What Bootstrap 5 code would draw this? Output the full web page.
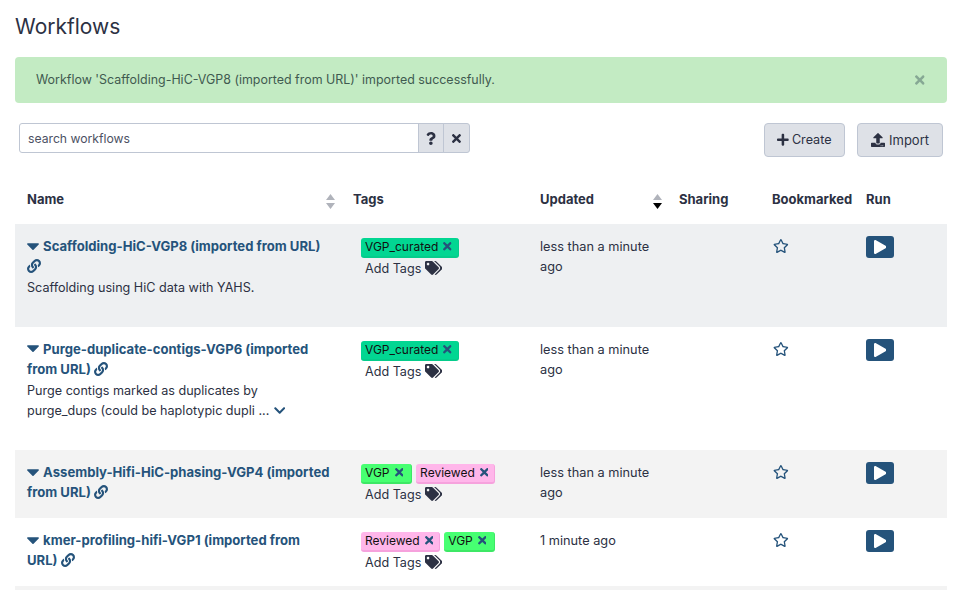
<!DOCTYPE html>
<html lang="en">

<head>
  <meta charset="UTF-8" />
  <meta name="viewport" content="width=device-width, initial-scale=1.0" />
  <title>Workflows</title>
  <link href="https://cdn.jsdelivr.net/npm/bootstrap@5.3.3/dist/css/bootstrap.min.css" rel="stylesheet" />
  <style>
    html, body { height: 590px; overflow: hidden; }
    body { font-family: Inter, "Liberation Sans", sans-serif; font-size: 12.6px; line-height: 20.4px; color: #2c3143; background: #fff; }
    .page-wrap { padding: 0 13px 0 15px; }
    .page-title { font-size: 21px; line-height: 26px; font-weight: 400; margin: 14px 0 17px; color: #2c3143; }
    .ico { fill: currentColor; height: 1em; vertical-align: -0.125em; }
    .flash { height: 46px; background: #c3ebc3; color: #3f5a50; border-radius: 4px; padding: 0 21px; margin-bottom: 20px; font-size: 12.45px; }
    .flash-close { color: #86a894; font-size: 14px; line-height: 1; margin-right: 1px; }
    .tools { padding: 0 4px; height: 53px; }
    .search-box { width: 451px; height: 30px; }
    .search-box .form-control { font-size: 12.2px; height: 30px; border-color: #bfc6d3; color: #4c5163; padding: 0 8px; border-radius: 3px 0 0 3px; box-shadow: none; }
    .search-box .form-control::placeholder { color: #4c5163; opacity: 1; }
    .search-btn { background: #dee1e7; border: 1px solid #bfc6d3; color: #2c3143; width: 26px; padding: 0; font-size: 13px; display: flex; align-items: center; justify-content: center; }
    .search-btn:last-child { width: 27px; border-radius: 0 3px 3px 0; margin-left: -1px; }
    .tool-btn { background: #dee1e7; border: 1px solid #bfc6d3; color: #2c3143; font-size: 12.6px; height: 34px; padding: 0 12.5px; border-radius: 4px; display: inline-flex; align-items: center; gap: 3px; }
    .tool-btn .ico { font-size: 13.5px; }
    .tool-import { font-size: 13px; gap: 4px; padding: 0 13px; }
    .tool-import .ico { font-size: 14px; }
    .wf-table { table-layout: fixed; width: 932px; margin: 0; color: #2c3143; font-size: 12.6px; }
    .wf-table > :not(caption) > * > * { border: 0; padding: 12px; background: transparent; box-shadow: none; color: inherit; }
    .wf-table thead th { font-size: 13px; font-weight: 700; padding-top: 12px; padding-bottom: 15px; height: 48px; position: relative; }
    .wf-table > tbody > tr > td.cell-name { padding-right: 10px; }
    .wf-table > tbody > tr > td.wf-when { font-size: 12.75px; padding-top: 13px; }
    .col-name { width: 326px; }
    .col-tags { width: 187px; }
    .col-updated { width: 139px; }
    .col-sharing { width: 93px; }
    .col-bookmarked { width: 94px; }
    .row-hover { background: #eef0f2; }
    .row-odd { background: #f3f3f3; }
    .sort-mark { position: absolute; top: 18px; right: 6px; width: 9px; height: 15px; }
    .sort-updated { right: 5px; }
    .wf-name { display: block; color: #25537b; font-size: 13.1px; font-weight: 700; text-decoration: none; }
    .wf-name .ico { color: #25537b; font-size: 14px; }
    .wf-name .caret { width: 12px; height: 7px; font-size: inherit; vertical-align: 1.5px; margin-right: 1px; }
    .wf-desc { margin: 1px 0 16.6px; }
    .wf-more { color: #25537b; margin-left: 1px; font-size: 13px; }
    .wf-tag { display: inline-flex; align-items: center; height: 20px; padding: 0 6px 1px 4px; margin: 2px 4px 0 0; border-radius: 3px; border-right: 1px solid transparent; border-bottom: 2px solid transparent; color: #111; font-size: 12px; line-height: 17px; gap: 5px; }
    .wf-tag .ico { color: #25537b; font-size: 12.5px; }
    .tag-curated { background: #02d692; border-color: #05cc8b; }
    .tag-vgp { background: #47ff72; border-color: #3de865; padding-right: 8px; }
    .tag-reviewed { background: #ffb6ea; border-color: #f6a2dd; }
    .tag-line { display: flex; flex-wrap: wrap; margin-left: 8px; }
    .add-tags { margin: 0 0 0 12px; padding-top: 1px; display: block; height: 22px; }
    .add-tags .ico { font-size: 14px; }
    .star-mark { color: #25537b; font-size: 14px; display: block; margin: 3px 0 0 1px; }
    .run-btn { background: #25537b; color: #fff; width: 28px; height: 22px; border-radius: 3px; border: 0; padding: 0; display: flex; align-items: center; justify-content: center; }
    .run-btn .ico { font-size: 14px; }
  </style>
</head>

<body>
  <svg class="d-none" xmlns="http://www.w3.org/2000/svg">
    <symbol id="i-caret" viewBox="10 190 300 172"><path d="M31.3 192h257.3c17.8 0 26.7 21.5 14.1 34.1L174.1 354.8c-7.8 7.8-20.5 7.8-28.3 0L17.2 226.1C4.6 213.5 13.5 192 31.3 192z"/></symbol>
    <symbol id="i-times" viewBox="0 0 352 512"><path d="M242.72 256l100.07-100.07c12.28-12.28 12.28-32.19 0-44.48l-22.24-22.24c-12.28-12.28-32.19-12.28-44.48 0L176 189.28 75.93 89.21c-12.28-12.28-32.19-12.28-44.48 0L9.21 111.45c-12.28 12.28-12.28 32.19 0 44.48L109.28 256 9.21 356.07c-12.28 12.28-12.28 32.19 0 44.48l22.24 22.24c12.28 12.28 32.2 12.28 44.48 0L176 322.72l100.07 100.07c12.28 12.28 32.2 12.28 44.48 0l22.24-22.24c12.28-12.28 12.28-32.19 0-44.48L242.72 256z"/></symbol>
    <symbol id="i-plus" viewBox="0 0 448 512"><path d="M416 208H272V64c0-17.67-14.33-32-32-32h-32c-17.67 0-32 14.33-32 32v144H32c-17.67 0-32 14.33-32 32v32c0 17.67 14.33 32 32 32h144v144c0 17.67 14.33 32 32 32h32c17.67 0 32-14.33 32-32V304h144c17.67 0 32-14.33 32-32v-32c0-17.67-14.33-32-32-32z"/></symbol>
    <symbol id="i-upload" viewBox="0 0 512 512"><path d="M296 384h-80c-13.3 0-24-10.7-24-24V192h-87.7c-17.8 0-26.7-21.5-14.1-34.1L242.3 5.7c7.5-7.5 19.8-7.5 27.3 0l152.2 152.2c12.6 12.6 3.7 34.1-14.1 34.1H320v168c0 13.3-10.7 24-24 24zm216-8v112c0 13.3-10.7 24-24 24H24c-13.3 0-24-10.7-24-24V376c0-13.3 10.7-24 24-24h136v8c0 30.9 25.1 56 56 56h80c30.9 0 56-25.1 56-56v-8h136c13.3 0 24 10.7 24 24zm-124 88c0-11-9-20-20-20s-20 9-20 20 9 20 20 20 20-9 20-20zm64 0c0-11-9-20-20-20s-20 9-20 20 9 20 20 20 20-9 20-20z"/></symbol>
    <symbol id="i-play" viewBox="0 0 448 512"><path d="M424.4 214.7L72.4 6.6C43.8-10.3 0 6.1 0 47.9V464c0 37.5 40.7 60.1 72.4 41.3l352-208c31.4-18.5 31.5-64.1 0-82.6z"/></symbol>
    <symbol id="i-star" viewBox="0 0 576 512"><path d="M528.1 171.5L382 150.2 316.7 17.8c-11.7-23.6-45.6-23.9-57.4 0L194 150.2 47.9 171.5c-26.2 3.8-36.7 36.1-17.7 54.6l105.7 103-25 145.5c-4.5 26.3 23.2 46 46.4 33.7L288 439.6l130.7 68.7c23.2 12.2 50.9-7.4 46.4-33.7l-25-145.5 105.7-103c19-18.5 8.5-50.8-17.7-54.6zM388.6 312.3l23.7 138.4L288 385.4l-124.3 65.3 23.7-138.4-100.6-98 139-20.2 62.2-126 62.2 126 139 20.2-100.6 98z"/></symbol>
    <symbol id="i-link" viewBox="0 0 512 512"><path d="M326.612 185.391c59.747 59.809 58.927 155.698.36 214.59-.11.12-.24.25-.36.37l-67.2 67.2c-59.27 59.27-155.699 59.262-214.96 0-59.27-59.26-59.27-155.7 0-214.96l37.106-37.106c9.84-9.84 26.786-3.3 27.294 10.606.648 17.722 3.826 35.527 9.69 52.721 1.986 5.822.567 12.262-3.783 16.612l-13.087 13.087c-28.026 28.026-28.905 73.66-1.155 101.96 28.024 28.579 74.086 28.749 102.325.51l67.2-67.19c28.191-28.191 28.073-73.757 0-101.83-3.701-3.694-7.429-6.564-10.341-8.569a16.037 16.037 0 0 1-6.947-12.606c-.396-10.567 3.348-21.456 11.698-29.806l21.054-21.055c5.521-5.521 14.182-6.199 20.584-1.731a152.482 152.482 0 0 1 20.522 17.197zM467.547 44.449c-59.261-59.262-155.69-59.27-214.96 0l-67.2 67.2c-.12.12-.25.25-.36.37-58.566 58.892-59.387 154.781.36 214.59a152.454 152.454 0 0 0 20.521 17.196c6.402 4.468 15.064 3.789 20.584-1.731l21.054-21.055c8.35-8.35 12.094-19.239 11.698-29.806a16.037 16.037 0 0 0-6.947-12.606c-2.912-2.005-6.64-4.875-10.341-8.569-28.073-28.073-28.191-73.639 0-101.83l67.2-67.19c28.239-28.239 74.3-28.069 102.325.51 27.75 28.3 26.872 73.934-1.155 101.96l-13.087 13.087c-4.35 4.35-5.769 10.79-3.783 16.612 5.864 17.194 9.042 34.999 9.69 52.721.509 13.906 17.454 20.446 27.294 10.606l37.106-37.106c59.271-59.259 59.271-155.699.001-214.959z"/></symbol>
    <symbol id="i-tags" viewBox="0 0 640 512"><path d="M497.941 225.941L286.059 14.059A48 48 0 0 0 252.118 0H48C21.49 0 0 21.49 0 48v204.118a48 48 0 0 0 14.059 33.941l211.882 211.882c18.744 18.745 49.136 18.746 67.882 0l204.118-204.118c18.745-18.745 18.745-49.137 0-67.882zM112 160c-26.51 0-48-21.49-48-48s21.49-48 48-48 48 21.49 48 48-21.49 48-48 48zm513.941 133.823L421.823 497.941c-18.745 18.745-49.137 18.745-67.882 0l-.36-.36L527.64 323.522c16.999-16.999 26.36-39.6 26.36-63.64s-9.362-46.641-26.36-63.64L331.397 0h48.721a48 48 0 0 1 33.941 14.059l211.882 211.882c18.745 18.745 18.745 49.137 0 67.882z"/></symbol>
    <symbol id="i-chevron" viewBox="0 0 448 512"><path d="M207.029 381.476L12.686 187.132c-9.373-9.373-9.373-24.569 0-33.941l22.667-22.667c9.357-9.357 24.522-9.375 33.901-.04L224 284.505l154.745-154.021c9.379-9.335 24.544-9.317 33.901.04l22.667 22.667c9.373 9.373 9.373 24.569 0 33.941L240.971 381.476c-9.373 9.372-24.569 9.372-33.942 0z"/></symbol>
    <symbol id="i-question" viewBox="0 0 384 512"><path d="M202.021 0C122.202 0 70.503 32.703 29.914 91.026c-7.363 10.58-5.093 25.086 5.178 32.874l43.138 32.709c10.373 7.865 25.132 6.026 33.253-4.148 25.049-31.381 43.63-49.449 82.757-49.449 30.764 0 68.816 19.799 68.816 49.631 0 22.552-18.617 34.134-48.993 51.164-35.423 19.86-82.299 44.576-82.299 106.405V320c0 13.255 10.745 24 24 24h72.471c13.255 0 24-10.745 24-24v-5.773c0-42.86 125.268-44.645 125.268-160.627C377.504 66.256 286.902 0 202.021 0zM192 373.459c-38.196 0-69.271 31.075-69.271 69.271 0 38.195 31.075 69.27 69.271 69.27s69.271-31.075 69.271-69.271-31.075-69.27-69.271-69.27z"/></symbol>
  </svg>

  <div class="page-wrap">
    <h1 class="page-title">Workflows</h1>

    <div class="flash d-flex align-items-center justify-content-between" role="alert">
      <span>Workflow 'Scaffolding-HiC-VGP8 (imported from URL)' imported successfully.</span>
      <svg class="ico flash-close" viewBox="0 0 352 512"><use href="#i-times"/></svg>
    </div>

    <div class="tools d-flex justify-content-between align-items-start">
      <div class="input-group search-box flex-nowrap">
        <input class="form-control" placeholder="search workflows" />
        <button class="search-btn" type="button"><svg class="ico" viewBox="0 0 384 512"><use href="#i-question"/></svg></button>
        <button class="search-btn" type="button"><svg class="ico" viewBox="0 0 352 512"><use href="#i-times"/></svg></button>
      </div>
      <div class="d-flex gap-2">
        <button class="tool-btn me-1" type="button"><svg class="ico" viewBox="0 0 448 512"><use href="#i-plus"/></svg>Create</button>
        <button class="tool-btn tool-import" type="button"><svg class="ico" viewBox="0 0 512 512"><use href="#i-upload"/></svg>Import</button>
      </div>
    </div>

    <table class="table wf-table">
      <colgroup>
        <col class="col-name" /><col class="col-tags" /><col class="col-updated" /><col class="col-sharing" /><col class="col-bookmarked" /><col />
      </colgroup>
      <thead>
        <tr>
          <th>Name
            <svg class="sort-mark" viewBox="0 0 9 15"><path fill="#b0b3bb" d="M4.5 0 9 6H0zM4.5 15 0 9h9z"/></svg>
          </th>
          <th>Tags</th>
          <th>Updated
            <svg class="sort-mark sort-updated" viewBox="0 0 9 15"><path fill="#b0b3bb" d="M4.5 0 9 6H0z"/><path fill="#000" d="M4.5 15 0 9h9z"/></svg>
          </th>
          <th>Sharing</th>
          <th>Bookmarked</th>
          <th>Run</th>
        </tr>
      </thead>
      <tbody>
        <tr class="row-hover">
          <td class="cell-name">
            <a class="wf-name" href="#"><svg class="ico caret" viewBox="0 0 300 172"><use href="#i-caret"/></svg> Scaffolding-HiC-VGP8 (imported from URL) <svg class="ico" viewBox="0 0 512 512"><use href="#i-link"/></svg></a>
            <p class="wf-desc">Scaffolding using HiC data with YAHS.</p>
          </td>
          <td>
            <div class="tag-line"><span class="wf-tag tag-curated">VGP_curated <svg class="ico" viewBox="0 0 352 512"><use href="#i-times"/></svg></span></div>
            <span class="add-tags">Add Tags <svg class="ico" viewBox="0 0 640 512"><use href="#i-tags"/></svg></span>
          </td>
          <td class="wf-when">less than a minute ago</td>
          <td></td>
          <td><svg class="ico star-mark" viewBox="0 0 576 512"><use href="#i-star"/></svg></td>
          <td><button class="run-btn" type="button"><svg class="ico" viewBox="0 0 448 512"><use href="#i-play"/></svg></button></td>
        </tr>
        <tr>
          <td class="cell-name">
            <a class="wf-name" href="#"><svg class="ico caret" viewBox="0 0 300 172"><use href="#i-caret"/></svg> Purge-duplicate-contigs-VGP6 (imported from URL) <svg class="ico" viewBox="0 0 512 512"><use href="#i-link"/></svg></a>
            <p class="wf-desc">Purge contigs marked as duplicates by purge_dups (could be haplotypic dupli ... <svg class="ico wf-more" viewBox="0 0 448 512"><use href="#i-chevron"/></svg></p>
          </td>
          <td>
            <div class="tag-line"><span class="wf-tag tag-curated">VGP_curated <svg class="ico" viewBox="0 0 352 512"><use href="#i-times"/></svg></span></div>
            <span class="add-tags">Add Tags <svg class="ico" viewBox="0 0 640 512"><use href="#i-tags"/></svg></span>
          </td>
          <td class="wf-when">less than a minute ago</td>
          <td></td>
          <td><svg class="ico star-mark" viewBox="0 0 576 512"><use href="#i-star"/></svg></td>
          <td><button class="run-btn" type="button"><svg class="ico" viewBox="0 0 448 512"><use href="#i-play"/></svg></button></td>
        </tr>
        <tr class="row-odd">
          <td class="cell-name">
            <a class="wf-name" href="#"><svg class="ico caret" viewBox="0 0 300 172"><use href="#i-caret"/></svg> Assembly-Hifi-HiC-phasing-VGP4 (imported from URL) <svg class="ico" viewBox="0 0 512 512"><use href="#i-link"/></svg></a>
          </td>
          <td>
            <div class="tag-line"><span class="wf-tag tag-vgp">VGP <svg class="ico" viewBox="0 0 352 512"><use href="#i-times"/></svg></span><span class="wf-tag tag-reviewed">Reviewed <svg class="ico" viewBox="0 0 352 512"><use href="#i-times"/></svg></span></div>
            <span class="add-tags">Add Tags <svg class="ico" viewBox="0 0 640 512"><use href="#i-tags"/></svg></span>
          </td>
          <td class="wf-when">less than a minute ago</td>
          <td></td>
          <td><svg class="ico star-mark" viewBox="0 0 576 512"><use href="#i-star"/></svg></td>
          <td><button class="run-btn" type="button"><svg class="ico" viewBox="0 0 448 512"><use href="#i-play"/></svg></button></td>
        </tr>
        <tr>
          <td class="cell-name">
            <a class="wf-name" href="#"><svg class="ico caret" viewBox="0 0 300 172"><use href="#i-caret"/></svg> kmer-profiling-hifi-VGP1 (imported from URL) <svg class="ico" viewBox="0 0 512 512"><use href="#i-link"/></svg></a>
          </td>
          <td>
            <div class="tag-line"><span class="wf-tag tag-reviewed">Reviewed <svg class="ico" viewBox="0 0 352 512"><use href="#i-times"/></svg></span><span class="wf-tag tag-vgp">VGP <svg class="ico" viewBox="0 0 352 512"><use href="#i-times"/></svg></span></div>
            <span class="add-tags">Add Tags <svg class="ico" viewBox="0 0 640 512"><use href="#i-tags"/></svg></span>
          </td>
          <td class="wf-when">1 minute ago</td>
          <td></td>
          <td><svg class="ico star-mark" viewBox="0 0 576 512"><use href="#i-star"/></svg></td>
          <td><button class="run-btn" type="button"><svg class="ico" viewBox="0 0 448 512"><use href="#i-play"/></svg></button></td>
        </tr>
        <tr class="row-odd"><td colspan="6"></td></tr>
      </tbody>
    </table>
  </div>
</body>

</html>
